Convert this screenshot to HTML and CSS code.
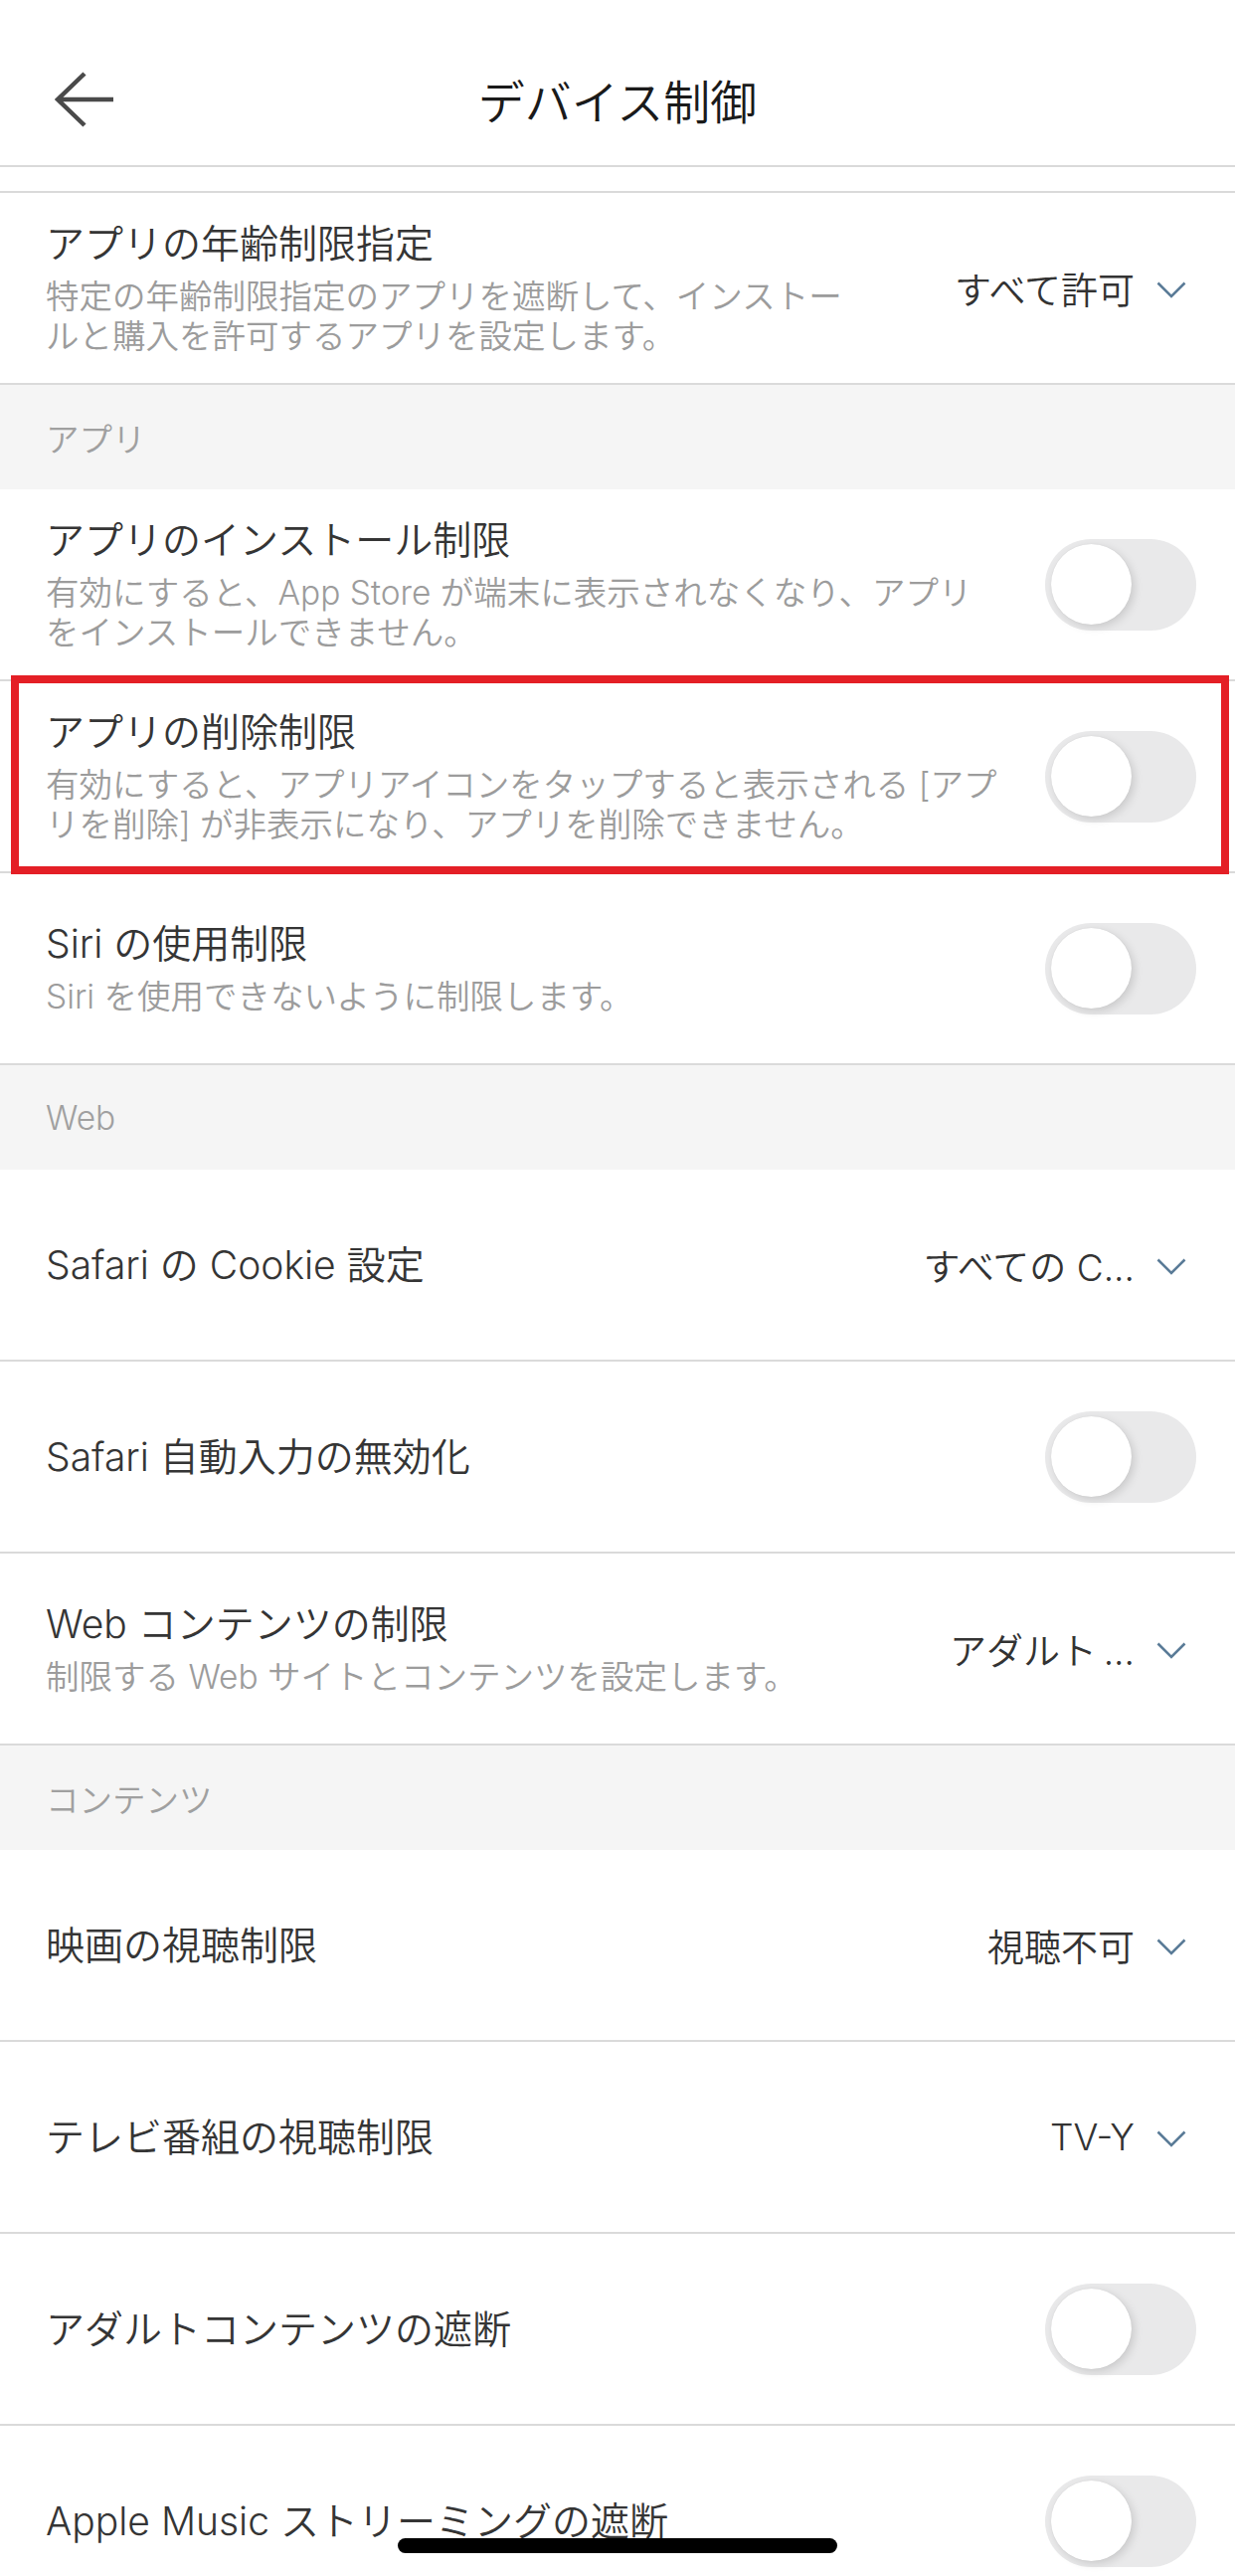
FILE: index.html
```html
<!DOCTYPE html>
<html lang="ja">
<head>
<meta charset="utf-8">
<title>デバイス制御</title>
<link rel="stylesheet" href="styles.css">
</head>
<body>
<header class="header">
  <svg class="back" viewBox="0 0 64 60" aria-hidden="true">
    <path d="M33 4 L6 30 L33 56 M6 30 H62" fill="none" stroke="#4a4a4a" stroke-width="4.5" stroke-linejoin="miter"/>
  </svg>
  <h1 class="title">デバイス制御</h1>
  <span></span>
</header>
<div class="sliver"></div>

<div class="row">
  <div class="text">
    <div class="label">アプリの年齢制限指定</div>
    <div class="desc">特定の年齢制限指定のアプリを遮断して、インストー<br>ルと購入を許可するアプリを設定します。</div>
  </div>
  <div class="value"><span>すべて許可</span><svg class="chev" viewBox="0 0 30 17"><path d="M1.5 1.5 L15 15 L28.5 1.5" fill="none" stroke="#5a7b97" stroke-width="2.6"/></svg></div>
</div>

<div class="section">アプリ</div>

<div class="row">
  <div class="text">
    <div class="label">アプリのインストール制限</div>
    <div class="desc">有効にすると、App Store が端末に表示されなくなり、アプリ<br>をインストールできません。</div>
  </div>
  <div class="toggle"><div class="knob"></div></div>
</div>

<div class="row highlight">
  <div class="text">
    <div class="label">アプリの削除制限</div>
    <div class="desc">有効にすると、アプリアイコンをタップすると表示される [アプ<br>リを削除] が非表示になり、アプリを削除できません。</div>
  </div>
  <div class="toggle"><div class="knob"></div></div>
</div>

<div class="row">
  <div class="text">
    <div class="label">Siri の使用制限</div>
    <div class="desc">Siri を使用できないように制限します。</div>
  </div>
  <div class="toggle"><div class="knob"></div></div>
</div>

<div class="section">Web</div>

<div class="row">
  <div class="text">
    <div class="label">Safari の Cookie 設定</div>
  </div>
  <div class="value"><span>すべての C...</span><svg class="chev" viewBox="0 0 30 17"><path d="M1.5 1.5 L15 15 L28.5 1.5" fill="none" stroke="#5a7b97" stroke-width="2.6"/></svg></div>
</div>

<div class="row">
  <div class="text">
    <div class="label">Safari 自動入力の無効化</div>
  </div>
  <div class="toggle"><div class="knob"></div></div>
</div>

<div class="row">
  <div class="text">
    <div class="label">Web コンテンツの制限</div>
    <div class="desc">制限する Web サイトとコンテンツを設定します。</div>
  </div>
  <div class="value"><span>アダルト&thinsp;...</span><svg class="chev" viewBox="0 0 30 17"><path d="M1.5 1.5 L15 15 L28.5 1.5" fill="none" stroke="#5a7b97" stroke-width="2.6"/></svg></div>
</div>

<div class="section">コンテンツ</div>

<div class="row">
  <div class="text">
    <div class="label">映画の視聴制限</div>
  </div>
  <div class="value"><span>視聴不可</span><svg class="chev" viewBox="0 0 30 17"><path d="M1.5 1.5 L15 15 L28.5 1.5" fill="none" stroke="#5a7b97" stroke-width="2.6"/></svg></div>
</div>

<div class="row">
  <div class="text">
    <div class="label">テレビ番組の視聴制限</div>
  </div>
  <div class="value"><span>TV-Y</span><svg class="chev" viewBox="0 0 30 17"><path d="M1.5 1.5 L15 15 L28.5 1.5" fill="none" stroke="#5a7b97" stroke-width="2.6"/></svg></div>
</div>

<div class="row">
  <div class="text">
    <div class="label">アダルトコンテンツの遮断</div>
  </div>
  <div class="toggle"><div class="knob"></div></div>
</div>

<div class="row">
  <div class="text">
    <div class="label">Apple Music ストリーミングの遮断</div>
  </div>
  <div class="toggle"><div class="knob"></div></div>
</div>

<div class="home"></div>
</body>
</html>
```

FILE: styles.css
```css
* {
  box-sizing: border-box;
  margin: 0;
  padding: 0;
}

html,
body {
  width: 1242px;
  height: 2590px;
  overflow: hidden;
  background: #ffffff;
}

body {
  position: relative;
  font-family: "Inter", "Noto Sans CJK JP", sans-serif;
  font-weight: 350;
  color: #333333;
}

.header {
  height: 168px;
  padding-top: 34px;
  border-bottom: 2px solid #dadada;
  display: grid;
  grid-template-columns: 1fr auto 1fr;
  align-items: center;
}

.back {
  display: block;
  width: 64px;
  height: 60px;
  margin-left: 52px;
}

.title {
  margin-top: 5px;
  font-size: 47px;
  line-height: 60px;
  font-weight: 350;
  color: #1a1a1a;
}

.sliver {
  height: 26px;
  border-bottom: 2px solid #dadada;
}

.row {
  position: relative;
  height: 193px;
  border-bottom: 2px solid #dadada;
  display: flex;
  align-items: center;
  padding: 0 39px 0 46px;
}

.text {
  flex: 1;
  min-width: 0;
}

.label {
  font-size: 39px;
  line-height: 48px;
  color: #353535;
  white-space: nowrap;
}

.desc {
  margin-top: 9px;
  font-size: 33.5px;
  line-height: 40px;
  color: #9c9c9c;
  white-space: nowrap;
}

.toggle {
  flex: none;
  width: 152px;
  height: 92px;
  border-radius: 46px;
  background: #e9e9ea;
  padding: 5.5px 6px;
}

.knob {
  width: 81px;
  height: 81px;
  border-radius: 50%;
  background: #ffffff;
  box-shadow: 3px 3px 8px rgba(0, 0, 0, 0.13), 0 0 1px rgba(0, 0, 0, 0.12);
}

.value {
  flex: none;
  display: flex;
  align-items: center;
  gap: 22px;
  padding-right: 10px;
  font-size: 37px;
  color: #333333;
}

.chev {
  display: block;
  width: 30px;
  height: 17px;
  margin-top: 3px;
}

.section {
  height: 105px;
  display: flex;
  align-items: center;
  padding-left: 46px;
  background: #f5f5f5;
  font-size: 33.5px;
  color: #a0a0a0;
}

.highlight::after {
  content: "";
  position: absolute;
  z-index: 2;
  top: -6px;
  left: 11px;
  right: 6px;
  bottom: -3px;
  border: 8px solid #e41f26;
  pointer-events: none;
}

.home {
  position: absolute;
  z-index: 3;
  left: 400px;
  top: 2552px;
  width: 442px;
  height: 15px;
  border-radius: 8px;
  background: #000000;
}
```
